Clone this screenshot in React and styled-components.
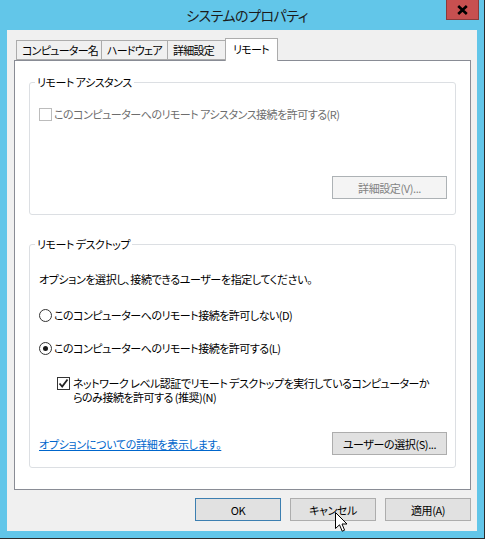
import React from "react";
import styled, { createGlobalStyle } from "styled-components";

const Global = createGlobalStyle`
  html, body { margin: 0; padding: 0; background: #62c6e9; }
  * { box-sizing: border-box; }
`;

const Frame = styled.div`
  position: relative;
  width: 485px;
  height: 539px;
  background: #62c6e9;
  border-right: 1px solid #2b2b2b;
  border-bottom: 1px solid #2b2b2b;
  display: flex;
  flex-direction: column;
  font-family: "Noto Sans CJK JP", "Noto Sans", sans-serif;
  font-feature-settings: "palt";
  font-size: 11px;
  letter-spacing: -0.5px;
  color: #000;
  overflow: hidden;
`;

const TitleBar = styled.div`
  height: 30px;
  display: flex;
  align-items: flex-start;
  flex-shrink: 0;
`;

const Title = styled.div`
  flex: 1;
  padding-left: 48px;
  text-align: center;
  line-height: 30px;
  font-size: 14px;
  letter-spacing: -0.5px;
  color: #1b1b1b;
`;

const Close = styled.div`
  width: 33px;
  height: 20px;
  margin-right: 5px;
  background: #c75050;
  border: 1px solid #8a3b3b;
  border-top: none;
  display: flex;
  align-items: center;
  justify-content: center;
`;

const Body = styled.div`
  margin-left: 7px;
  width: 470px;
  height: 501px;
  background: #f0f0f0;
  padding: 8px 6px 0 7px;
  display: flex;
  flex-direction: column;
`;

const TabStrip = styled.div`
  height: 22px;
  display: flex;
  align-items: flex-end;
  padding-left: 2px;
  position: relative;
  z-index: 1;
`;

const Tab = styled.div`
  height: ${(p) => (p.$active ? 23 : 20)}px;
  margin-bottom: ${(p) => (p.$active ? -1 : 0)}px;
  margin-left: ${(p) => (p.$first ? 0 : -1)}px;
  padding: 0 2px 0 ${(p) => (p.$active ? 7 : 5)}px;
  background: ${(p) => (p.$active ? "#fff" : "#f0f0f0")};
  border: 1px solid #acacac;
  border-bottom: ${(p) => (p.$active ? "none" : "1px solid #acacac")};
  display: flex;
  align-items: ${(p) => (p.$active ? "flex-start" : "center")};
  padding-top: ${(p) => (p.$active ? 2 : 0)}px;
  font-size: 11px;
  letter-spacing: -0.75px;
  line-height: 16px;
  width: ${(p) => p.$w}px;
  white-space: nowrap;
`;

const Panel = styled.div`
  height: 430px;
  background: #fff;
  border: 1px solid #898c95;
  padding: 13px 14px 0 14px;
`;

const Group = styled.fieldset`
  margin: ${(p) => p.$top}px 0 0 0;
  padding: 0 8px 0 9px;
  border: 1px solid #dcdfe3;
  border-radius: 3px;
  min-width: 0;
  display: flex;
  flex-direction: column;
`;

const Legend = styled.legend`
  padding: 0 2px;
  margin-left: -4px;
  font-size: 11px;
  line-height: 16px;
  color: #000;
`;

const Row = styled.div`
  display: flex;
  align-items: center;
  height: 16px;
  line-height: 16px;
  gap: ${(p) => p.$gap ?? 2}px;
  margin-top: ${(p) => p.$top}px;
  color: ${(p) => (p.$disabled ? "#6d6d6d" : "#000")};
  white-space: nowrap;
`;

const Text = styled.div`
  margin-top: ${(p) => p.$top}px;
  line-height: 16px;
  letter-spacing: -0.4px;
  white-space: nowrap;
`;

const CheckPara = styled.div`
  display: flex;
  align-items: flex-start;
  gap: 3px;
  margin-top: ${(p) => p.$top}px;
  padding-left: 18px;
  line-height: 14px;
  white-space: nowrap;
`;

const Box = styled.span`
  width: 13px;
  height: 13px;
  flex-shrink: 0;
  border: 1px solid ${(p) => (p.$disabled ? "#bcbcbc" : "#333")};
  background: #fff;
  margin-top: ${(p) => p.$top ?? 0}px;
  display: flex;
  align-items: center;
  justify-content: center;
`;

const Radio = styled.span`
  width: 13px;
  height: 13px;
  flex-shrink: 0;
  border-radius: 50%;
  border: 1px solid #333;
  background: #fff;
  display: flex;
  align-items: center;
  justify-content: center;
  &::after {
    content: "";
    display: ${(p) => (p.$checked ? "block" : "none")};
    width: 5px;
    height: 5px;
    border-radius: 50%;
    background: #1a1a1a;
  }
`;

const ActionRow = styled.div`
  display: flex;
  align-items: center;
  justify-content: ${(p) => p.$justify || "flex-end"};
  margin-top: ${(p) => p.$top}px;
  padding-bottom: ${(p) => p.$bottom}px;
`;

const Button = styled.button`
  width: ${(p) => p.$w}px;
  height: 23px;
  padding: 0;
  font-family: inherit;
  font-feature-settings: "palt";
  font-size: 11px;
  letter-spacing: -0.4px;
  background: ${(p) => (p.disabled ? "#f4f4f4" : "#e1e1e1")};
  color: ${(p) => (p.disabled ? "#838383" : "#000")};
  border: 1px solid ${(p) => (p.$default ? "#3c7fb1" : p.disabled ? "#adb2b5" : "#adadad")};
  display: flex;
  align-items: center;
  justify-content: center;
`;

const Link = styled.a`
  color: #0066cc;
  text-decoration: underline;
  line-height: 16px;
  letter-spacing: -0.3px;
  cursor: pointer;
`;

const Footer = styled.div`
  display: flex;
  justify-content: flex-end;
  gap: 9px;
  margin-top: 8px;
`;

const Cursor = styled.svg`
  position: absolute;
  left: 335px;
  top: 512px;
`;

export default function App() {
  return (
    <>
      <Global />
      <Frame>
        <TitleBar>
          <Title>システムのプロパティ</Title>
          <Close>
            <svg width="11" height="10" viewBox="0 0 11 10">
              <path d="M1.2 1 L9.8 9 M9.8 1 L1.2 9" stroke="#000" strokeWidth="2.6" />
            </svg>
          </Close>
        </TitleBar>
        <Body>
          <TabStrip>
            <Tab $first $w={86}>コンピューター名</Tab>
            <Tab $w={67}>ハードウェア</Tab>
            <Tab $w={59}>詳細設定</Tab>
            <Tab $active $w={53}>リモート</Tab>
          </TabStrip>
          <Panel>
            <Group $top={0}>
              <Legend>リモート アシスタンス</Legend>
              <Row $top={16} $disabled>
                <Box $disabled />
                <span>このコンピューターへのリモート アシスタンス接続を許可する(R)</span>
              </Row>
              <ActionRow $top={54} $bottom={15}>
                <Button disabled $w={115}>詳細設定(V)...</Button>
              </ActionRow>
            </Group>
            <Group $top={21}>
              <Legend>リモート デスクトップ</Legend>
              <Text $top={19}>オプションを選択し、接続できるユーザーを指定してください。</Text>
              <Row $top={20}>
                <Radio />
                <span>このコンピューターへのリモート接続を許可しない(D)</span>
              </Row>
              <Row $top={17}>
                <Radio $checked />
                <span>このコンピューターへのリモート接続を許可する(L)</span>
              </Row>
              <CheckPara $top={20}>
                <Box $top={1}>
                  <svg width="11" height="11" viewBox="0 0 11 11">
                    <path d="M1.5 5.5 L4.2 8.5 L9.5 1.5" fill="none" stroke="#222" strokeWidth="1.8" />
                  </svg>
                </Box>
                <span>
                  ネットワーク レベル認証でリモート デスクトップを実行しているコンピューターか
                  <br />
                  らのみ接続を許可する (推奨)(N)
                </span>
              </CheckPara>
              <ActionRow $justify="space-between" $top={28} $bottom={12}>
                <Link>オプションについての詳細を表示します。</Link>
                <Button $w={115}>ユーザーの選択(S)...</Button>
              </ActionRow>
            </Group>
          </Panel>
          <Footer>
            <Button $default $w={86}>OK</Button>
            <Button $w={86}>キャンセル</Button>
            <Button $w={86}>適用(A)</Button>
          </Footer>
        </Body>
        <Cursor width="13" height="21" viewBox="0 0 13 21">
          <path d="M0.5 0.5 L0.5 16.5 L4.5 12.8 L7.2 19.2 L9.6 18.2 L7 12 L12 12 Z" fill="#fff" stroke="#000" strokeWidth="1" strokeLinejoin="miter" />
        </Cursor>
      </Frame>
    </>
  );
}
